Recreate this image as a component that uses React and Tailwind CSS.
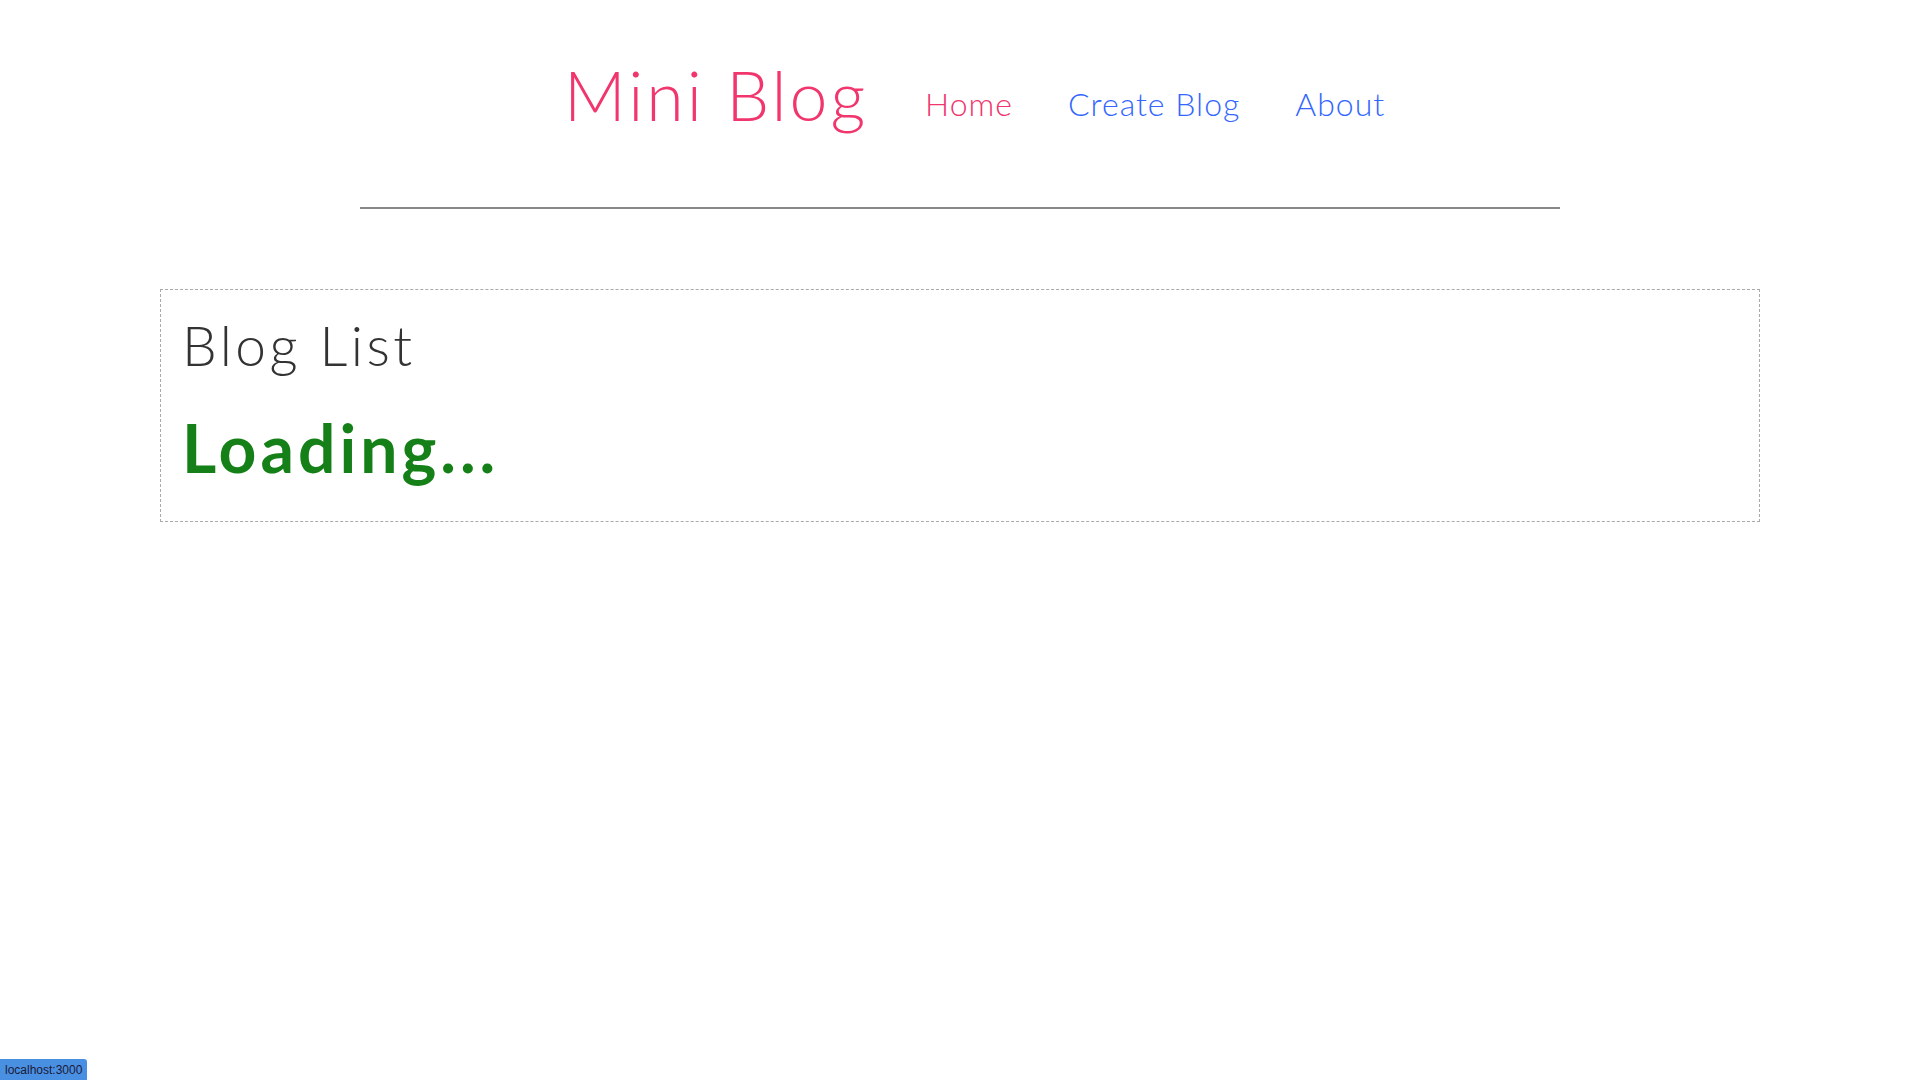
import React from 'react';

const links = [
  { label: 'Home', active: true },
  { label: 'Create Blog', active: false },
  { label: 'About', active: false },
];

const Navbar = () => (
  <nav className="mx-auto w-[1200px] border-b-2 border-[#888888] pt-[55px] pb-[72px] pl-[204px] flex items-start gap-[57px]">
    <h1 className="text-[68px] leading-[80px] font-light tracking-[3px] text-[#f1356d]">Mini Blog</h1>
    <div className="mt-[29px] flex items-start gap-[55px] text-[32px] leading-[40px] font-light tracking-[1px]">
      {links.map((link) => (
        <a
          key={link.label}
          href="#"
          className={link.active ? 'text-[#f1356d]' : 'text-[#3366ff]'}
        >
          {link.label}
        </a>
      ))}
    </div>
  </nav>
);

const BlogList = () => (
  <div className="mx-auto mt-[80px] w-[1600px] border border-dashed border-[#aaaaaa] px-[21px] pt-[23px] pb-[33px]">
    <h2 className="text-[55px] leading-[64px] font-light tracking-[3.5px] text-[#333333]">Blog List</h2>
    <div className="mt-[31px] text-[66px] leading-[80px] font-bold tracking-[4px] text-[#168018]">Loading...</div>
  </div>
);

export default function App() {
  return (
    <div className="min-h-screen bg-white font-['Lato','Noto_Sans',sans-serif]">
      <Navbar />
      <BlogList />
      <div className="fixed bottom-0 left-0 h-[21px] px-[5px] flex items-center bg-[#4a90e2] rounded-tr-[3px] text-[12px] text-[#1a1a3a] font-['Liberation_Sans',sans-serif]">
        localhost:3000
      </div>
    </div>
  );
}
